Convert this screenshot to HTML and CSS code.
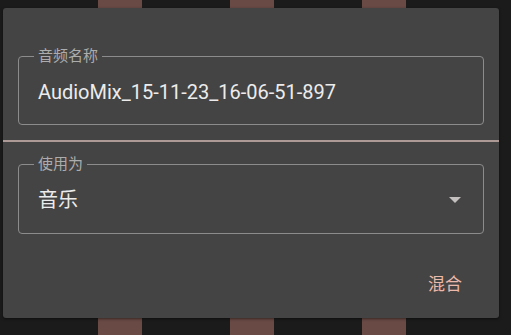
FILE: index.html
```html
<!DOCTYPE html>
<html lang="zh">
<head>
  <meta charset="utf-8">
  <title>混合音频</title>
  <link rel="stylesheet" href="styles.css">
</head>
<body>
  <!-- Track bars peeking out behind the dialog -->
  <div class="backdrop">
    <div class="bar bar-1"></div>
    <div class="bar bar-2"></div>
    <div class="bar bar-3"></div>
  </div>

  <div class="dialog">
    <fieldset class="field">
      <legend>音频名称</legend>
      <div class="field-value">AudioMix_15-11-23_16-06-51-897</div>
    </fieldset>

    <div class="divider"></div>

    <fieldset class="field select">
      <legend>使用为</legend>
      <div class="field-value">
        <span>音乐</span>
        <svg class="arrow" width="12" height="6" viewBox="0 0 12 6">
          <path d="M0 0 L12 0 L6 6 Z" fill="#c4c0c0"/>
        </svg>
      </div>
    </fieldset>

    <div class="actions">
      <button class="text-button">混合</button>
    </div>
  </div>
</body>
</html>
```

FILE: styles.css
```css
body {
  margin: 0;
  background-color: #1b1b1b;
  font-family: Roboto, "Noto Sans CJK SC", sans-serif;
  position: relative;
  height: 335px;
  overflow: hidden;
}

.backdrop {
  position: absolute;
  top: 0;
  left: 0;
  width: 100%;
  height: 100%;
}

.bar {
  position: absolute;
  top: 0;
  width: 44px;
  height: 100%;
  background-color: #6a4a45;
}

.bar-1 { left: 98px; }
.bar-2 { left: 230px; }
.bar-3 { left: 362px; }

.dialog {
  position: relative;
  margin: 8px 0 0 3px;
  width: 496px;
  box-sizing: border-box;
  padding: 40px 15px 22px 15px;
  background-color: #444444;
  border-radius: 3px;
  box-shadow: 0 1px 3px rgba(0, 0, 0, 0.5);
}

.field {
  margin: 0;
  padding: 0 15px 0 15px;
  border: 1px solid #8c8c8c;
  border-radius: 4px;
}

.field legend {
  padding: 0 4px;
  font-size: 15px;
  line-height: 16px;
  color: #acacac;
}

.field-value {
  display: flex;
  align-items: center;
  justify-content: space-between;
  padding: 18px 4px 22px 4px;
  font-size: 20px;
  line-height: 20px;
  color: #ececec;
}

.select .field-value {
  padding-right: 7px;
  padding-bottom: 23px;
}

.divider {
  height: 2px;
  margin: 15px -15px 14px -15px;
  background-color: #ad9996;
}

.actions {
  display: flex;
  justify-content: flex-end;
  margin-top: 38px;
}

.text-button {
  padding: 0;
  margin-right: 22px;
  background: none;
  border: none;
  font-family: Roboto, "Noto Sans CJK SC", sans-serif;
  font-size: 17px;
  line-height: 24px;
  color: #ecb9ad;
  cursor: pointer;
}
```
